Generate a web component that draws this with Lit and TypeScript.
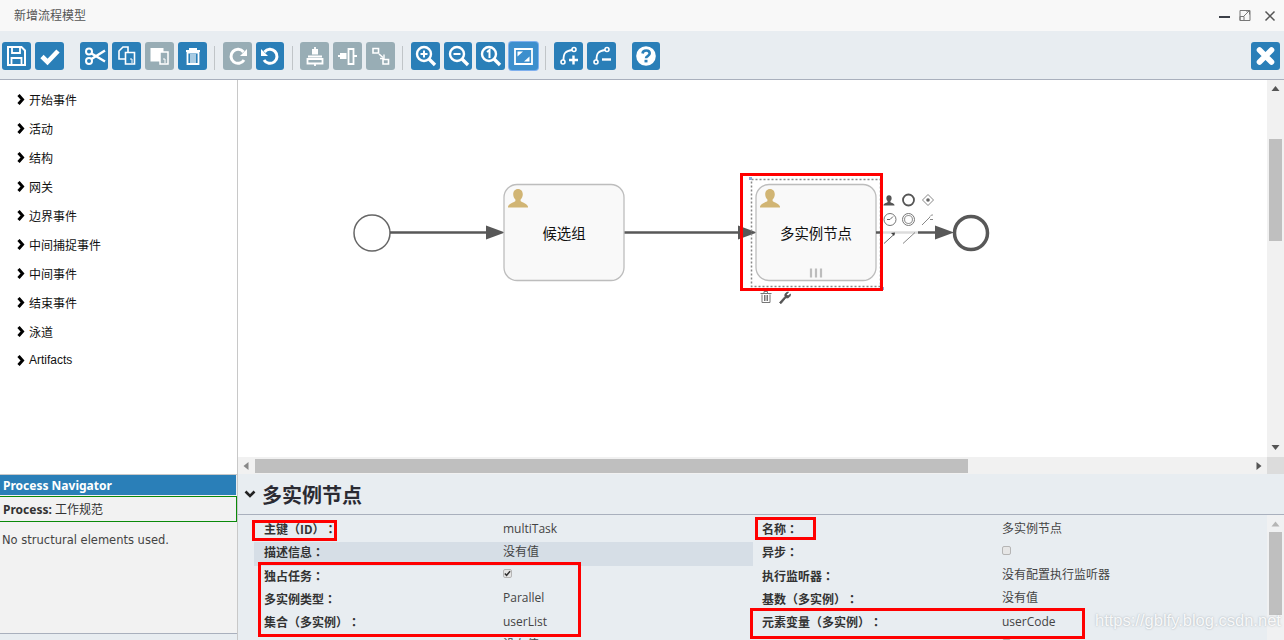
import { LitElement, html, css, svg } from "lit";
import { customElement } from "lit/decorators.js";

const I: Record<string, any> = {
  save: svg`<path d="M6 5h13.5l3.500 3.500V23H6z" fill="none" stroke="#fff" stroke-width="2"/><path d="M10 5.500v5.500h8V5.500M9.500 23v-7h10v7" fill="none" stroke="#fff" stroke-width="1.800"/>`,
  check: svg`<path d="M7 14.500l5.500 5.500L23 9" fill="none" stroke="#fff" stroke-width="4.600"/>`,
  cut: svg`<circle cx="9" cy="9.500" r="3" fill="none" stroke="#fff" stroke-width="2"/><circle cx="9" cy="19" r="3" fill="none" stroke="#fff" stroke-width="2"/><path d="M11.500 11.500L25 19.500M11.500 17L25 8.500" stroke="#fff" stroke-width="2.400"/>`,
  copy: svg`<path d="M7 9l4-4h5v12H7z" fill="none" stroke="#fff" stroke-width="1.600"/><path d="M13.500 10.500h9v11.500h-9z" fill="#2a7fb8" stroke="#fff" stroke-width="1.600"/><path d="M20 21v-4h-2" stroke="#fff" fill="none"/>`,
  paste: svg`<path d="M5.500 6h13v13.500h-13z" fill="#fff"/><path d="M15 10h8v12h-8z" fill="#98adb5" stroke="#fff" stroke-width="1.500"/><path d="M20 21v-4h-2" stroke="#fff" fill="none"/>`,
  del: svg`<path d="M8 9h14M12 8.500V7h6v1.500" fill="none" stroke="#fff" stroke-width="2"/><path d="M9.500 10.500v11.500h11V10.500z" fill="none" stroke="#fff" stroke-width="1.800"/><path d="M13 12v9M15 12v9M17 12v9" stroke="#fff" stroke-width="1.200"/>`,
  redo: svg`<path d="M20.500 10A7 7 0 1 0 21 18" fill="none" stroke="#fff" stroke-width="3"/><path d="M24 7v7h-7z" fill="#fff"/>`,
  undo: svg`<path d="M8.500 10A7 7 0 1 1 8 18" fill="none" stroke="#fff" stroke-width="3"/><path d="M5 7v7h7z" fill="#fff"/>`,
  al1: svg`<path d="M12 7h6v5.500h-6z" fill="#fff"/><path d="M7.500 17h15v4.500h-15z" fill="none" stroke="#fff" stroke-width="1.800"/><path d="M8 14.500h14M15 5v4M15 21v3" stroke="#fff" stroke-width="1.800"/>`,
  al2: svg`<path d="M7 11h6.500v6H7z" fill="#fff"/><path d="M15.500 7h5v15h-5z" fill="none" stroke="#fff" stroke-width="1.800"/><path d="M5 14h3M20 14h4" stroke="#fff" stroke-width="1.800"/>`,
  size: svg`<path d="M7 6.500h5.500v4.500H7zM17 17.500h5.500V22H17z" fill="none" stroke="#fff" stroke-width="1.600"/><path d="M13 12l4 3.500" stroke="#fff" stroke-width="1.600"/><path d="M18 12.500v4h-4" fill="none" stroke="#fff" stroke-width="1.400"/>`,
  zin: svg`<circle cx="13" cy="12" r="7" fill="none" stroke="#fff" stroke-width="2.400"/><path d="M18 17l6 6" stroke="#fff" stroke-width="3.400"/><path d="M9.500 12h7M13 8.500v7" stroke="#fff" stroke-width="2"/>`,
  zout: svg`<circle cx="13" cy="12" r="7" fill="none" stroke="#fff" stroke-width="2.400"/><path d="M18 17l6 6" stroke="#fff" stroke-width="3.400"/><path d="M9.500 12h7" stroke="#fff" stroke-width="2"/>`,
  zone: svg`<circle cx="13" cy="12" r="7" fill="none" stroke="#fff" stroke-width="2.400"/><path d="M18 17l6 6" stroke="#fff" stroke-width="3.400"/><path d="M11 10l2.500-2v8" fill="none" stroke="#fff" stroke-width="2"/>`,
  fit: svg`<path d="M6 7h17v15H6z" fill="none" stroke="#fff" stroke-width="1.800"/><path d="M8.500 9.500h5.500l-5.500 5zM20.500 19.500H15l5.500-5z" fill="#fff"/>`,
  badd: svg`<circle cx="9" cy="20" r="2" fill="none" stroke="#fff" stroke-width="1.600"/><circle cx="20" cy="7.500" r="2" fill="none" stroke="#fff" stroke-width="1.600"/><path d="M9.500 18c0-7 2-9 8.500-10" fill="none" stroke="#fff" stroke-width="1.800"/><path d="M15 18h9M19.500 13.500v9" stroke="#fff" stroke-width="2.400"/>`,
  brem: svg`<circle cx="9" cy="20" r="2" fill="none" stroke="#fff" stroke-width="1.600"/><circle cx="20" cy="7.500" r="2" fill="none" stroke="#fff" stroke-width="1.600"/><path d="M9.500 18c0-7 2-9 8.500-10" fill="none" stroke="#fff" stroke-width="1.800"/><path d="M15 17.500h9" stroke="#fff" stroke-width="2.400"/>`,
  help: svg`<circle cx="14" cy="14" r="9.800" fill="#fff"/><path d="M10.500 11.500c.5-4 7-4 7.200-.2.100 3-3.700 2.600-3.700 5" fill="none" stroke="#2a7fb8" stroke-width="2.600"/><path d="M12.500 17.800h3v2.600h-3z" fill="#2a7fb8"/>`,
  close: svg`<path d="M8.500 8l12 12M20.500 8l-12 12" stroke="#fff" stroke-width="5.600" stroke-linecap="round"/>`,
};

type B = { i: string; off?: boolean; on?: boolean } | "sep" | "gap";
const TOOLS: B[] = [
  { i: "save" }, { i: "check" }, "gap",
  { i: "cut" }, { i: "copy" }, { i: "paste", off: true }, { i: "del" }, "sep",
  { i: "redo", off: true }, { i: "undo" }, "sep",
  { i: "al1", off: true }, { i: "al2", off: true }, { i: "size", off: true }, "sep",
  { i: "zin" }, { i: "zout" }, { i: "zone" }, { i: "fit", on: true }, "sep",
  { i: "badd" }, { i: "brem" }, "gap",
  { i: "help" },
];

const PALETTE = ["开始事件", "活动", "结构", "网关", "边界事件", "中间捕捉事件", "中间事件", "结束事件", "泳道", "Artifacts"];

const LEFT: [string, any, boolean?][] = [
  ["主键（ID）：", "multiTask"],
  ["描述信息：", "没有值", true],
  ["独占任务：", "on"],
  ["多实例类型：", "Parallel"],
  ["集合（多实例）：", "userList"],
  ["", "没有值"],
];
const RIGHT: [string, any][] = [
  ["名称：", "多实例节点"],
  ["异步：", "off"],
  ["执行监听器：", "没有配置执行监听器"],
  ["基数（多实例）：", "没有值"],
  ["元素变量（多实例）：", "userCode"],
  ["", "off"],
];

const person = (x: number, y: number, s: number, c: string) => svg`
  <g transform="translate(${x} ${y}) scale(${s})" fill="${c}">
    <path d="M0-9.500c3 0 4.800 2.300 4.800 5.200 0 2.200-.9 4-2.200 5.200v1.600c0 .8 6 2 7.400 5.500v1H-10v-1c1.400-3.500 7.400-4.700 7.400-5.500V.9C-3.900-.3-4.800-2.100-4.800-4.300-4.800-7.200-3-9.500 0-9.500z"/>
  </g>`;

@customElement("app-root")
export class AppRoot extends LitElement {
  static styles = css`
    :host { display: block; width: 1284px; height: 640px; overflow: hidden; position: relative;
      font-family: "Open Sans", "Noto Sans CJK SC", sans-serif; font-size: 12px; color: #333; background: #fff; text-spacing-trim: space-all; }
    .titlebar { height: 31px; background: #f8f8f8; display: flex; align-items: center; padding: 0 14px 2px; color: #555;
      font-family: "Liberation Sans", "Noto Sans CJK SC", sans-serif; box-sizing: border-box; }
    .titlebar .t { flex: 1; }
    .winctl { display: flex; align-items: center; gap: 8px; margin: 2px -6px 0 0; }
    .winclose { margin-left: 5px; }
    .toolbar { height: 49px; box-sizing: border-box; background: #e8edf1; border-bottom: 1px solid #a9b0bd;
      display: flex; align-items: flex-start; padding: 11px 4px 0 2px; gap: 4px; }
    .btn { width: 28.8px; height: 28px; border-radius: 3px; background: #2a7fb8; flex: none; box-sizing: border-box; display: block; }
    .btn svg { display: block; }
    .btn.off { background: #98adb5; }
    .btn.on { background: #3d8fcd; box-shadow: 0 0 0 1px #7fb0ee; }
    .sep { width: 1px; height: 24px; margin: 4px 3.5px 0; background: #c0c5c8; flex: none; }
    .sep.gap { background: none; }
    .grow { flex: 1; }
    .main { display: grid; grid-template-columns: 237px 1px 1fr; height: 560px; }
    .divider { background: #c8c8c8; }
    .left { display: flex; flex-direction: column; min-width: 0; background: #e8edf1; }
    .palette { height: 395px; background: #fff; padding-top: 4.5px; box-sizing: border-box; border-bottom: 1px solid #c8c8c8;
      font-family: "Liberation Sans", "Noto Sans CJK SC", sans-serif; color: #111; }
    .pal { height: 29px; display: flex; align-items: center; padding-left: 17px; gap: 4px; }
    .pal svg { flex: none; }
    .navh { height: 20px; line-height: 22px; background: #2a7fb8; color: #fff; font-weight: 700; padding-left: 3px; margin-right: 1px;
      font-family: "Noto Sans", sans-serif; font-size: 12px; }
    .navbody { height: 139px; background: #f2f2f2; border-bottom: 1px solid #a9b0bd; box-sizing: border-box; }
    .proc { margin-top: 1px; height: 26px; line-height: 26px; box-sizing: border-box; border: 1px solid #0a8a0a; border-left: 0; padding-left: 3px;
      font-family: "Noto Sans", "Noto Sans CJK SC", sans-serif; font-size: 12px; }
    .proc b { font-weight: 700; }
    .nostruct { margin: 11px 0 0 2px; font-family: "DejaVu Sans", sans-serif; font-size: 11.5px; color: #444; }
    .work { display: flex; flex-direction: column; min-width: 0; }
    .canvasrow { height: 377px; display: flex; background: #fff; }
    .canvas { flex: 1; overflow: hidden; }
    .canvas svg { display: block; }
    .canvas text { font-family: "Liberation Sans", "Noto Sans CJK SC", sans-serif; font-size: 14.4px; fill: #111; }
    .vbar { width: 17px; background: #f1f1f1; display: flex; flex-direction: column; align-items: center; padding: 2px 0 3px; box-sizing: border-box; }
    .thumb { background: #bfbfbf; }
    .vbar .sp1 { height: 43px; flex: none; }
    .vbar .thumb { width: 13px; height: 102px; flex: none; }
    .vbar .grow { flex: 1; }
    .arrow { flex: none; display: block; }
    .hbar { height: 17px; background: #f1f1f1; display: flex; align-items: center; }
    .hbar .thumb { height: 14px; width: 713px; }
    .corner { width: 17px; height: 17px; background: #dcdcdc; }
    .props { flex: 1; background: #e8edf1; min-height: 0; overflow: hidden; display: flex; flex-direction: column; }
    .phead { height: 41px; flex: none; box-sizing: border-box; border-bottom: 1px solid #a9b0bd; display: flex; align-items: center; padding-left: 6px; gap: 6px;
      font-size: 20px; font-weight: 700; color: #2b2b33; font-family: "Noto Sans CJK SC", sans-serif; }
    .pbody { flex: 1; display: flex; min-height: 0; }
    .pgrid { flex: 1; display: grid; grid-template-columns: 499px 499px; padding: 3px 0 0 16px; align-content: start; }
    .row { height: 23.25px; line-height: 21.25px; display: grid; grid-template-columns: 249px 1fr; white-space: nowrap; }
    .row.shade { background: #d6dee6; margin-top: .75px; margin-bottom: -1.5px; height: 24px; line-height: 20.5px; }
    .lab { padding-left: 10px; font-weight: 700; color: #333; font-family: "Noto Sans CJK SC", sans-serif; font-size: 12px; }
    .rcol .lab { padding-left: 9px; }
    .colon { font-family: "Noto Sans CJK TC", sans-serif; }
    .val { color: #444; font-family: "Open Sans", "Noto Sans CJK SC", sans-serif; font-size: 12px; margin-top: -.5px; }
    .cb { display: inline-block; width: 7px; height: 7px; border: 1px solid #b5b5b5; border-radius: 2px; background: #e6e6e6; vertical-align: 1px; }
    .cb svg { display: block; }
    .pbar { width: 17px; background: #f0f1f2; display: flex; flex-direction: column; align-items: center; flex: none; }
    .pbar .thumb { width: 13px; height: 83px; flex: none; margin-top: -2px; }
    .mark { position: absolute; border: 3px solid #f00; box-sizing: border-box; pointer-events: none; }
    .m1 { left: 740px; top: 173px; width: 143px; height: 118px; }
    .m2 { left: 252px; top: 520px; width: 85px; height: 21px; }
    .m3 { left: 258px; top: 562px; width: 323px; height: 75px; }
    .m4 { left: 755px; top: 517px; width: 61px; height: 23px; }
    .m5 { left: 750px; top: 608px; width: 335px; height: 31px; }
    .wm { position: absolute; left: 1095px; top: 611px; color: rgba(255,255,255,.9); font-family: "Liberation Sans", sans-serif; font-size: 16.5px;
      text-shadow: 0 0 2px rgba(110,120,130,.55); white-space: nowrap; }
  `;

  private cell(v: any) {
    if (v === "on") return html`<span class="cb"><svg width="7" height="7" viewBox="0 0 7 7"><path d="M.8 3.500l1.800 1.800 3.500-4" fill="none" stroke="#333" stroke-width="1.500"/></svg></span>`;
    if (v === "off") return html`<span class="cb"></span>`;
    return v;
  }

  private label(l: string) {
    if (!l.endsWith("：")) return l;
    return html`${l.slice(0, -1)}<span class="colon">：</span>`;
  }

  private tri(dir: "u" | "d" | "l" | "r", c: string, sz = 17, h = 16) {
    const cx = sz / 2, cy = h / 2;
    const p = { u: `${cx - 4},${cy + 2} ${cx + 4},${cy + 2} ${cx},${cy - 3}`, d: `${cx - 4},${cy - 2} ${cx + 4},${cy - 2} ${cx},${cy + 3}`,
      l: `${cx + 2},${cy - 4} ${cx + 2},${cy + 4} ${cx - 3},${cy}`, r: `${cx - 2},${cy - 4} ${cx - 2},${cy + 4} ${cx + 3},${cy}` }[dir];
    return html`<svg class="arrow" width="${sz}" height="${h}" viewBox="0 0 ${sz} ${h}"><polygon points="${p}" fill="${c}"/></svg>`;
  }

  private diagram() {
    const ox = 238, oy = 80;
    return html`<svg width="1029" height="377" viewBox="${ox} ${oy} 1029 377">
      <circle cx="372" cy="233" r="18" fill="#fff" stroke="#666" stroke-width="1.5"/>
      <path d="M390 232.500H488M624 232.500H740" stroke="#585858" stroke-width="2.5"/>
      <polygon points="486,225.500 505,232.500 486,239.500" fill="#585858"/>
      <rect x="504" y="184.500" width="120" height="96" rx="13" fill="#f9f9f9" stroke="#bdbdbd" stroke-width="1.3"/>
      ${person(518, 198.500, 1, "#d1b574")}
      <text x="564" y="238.500" text-anchor="middle">候选组</text>

      <polygon points="738,225.500 757,232.500 738,239.500" fill="#585858"/>
      <rect x="751.500" y="179.500" width="129" height="107" fill="none" stroke="#888" stroke-width="1.5" stroke-dasharray="2 2"/>
      <rect x="749" y="177" width="3" height="3" fill="#8aa8d8"/>
      <rect x="881" y="287" width="3" height="3" fill="#8aa8d8"/>
      <rect x="756" y="184.500" width="120" height="96" rx="13" fill="#f9f9f9" stroke="#bdbdbd" stroke-width="1.3"/>
      ${person(770, 198.500, 1, "#d1b574")}
      <text x="816" y="238.500" text-anchor="middle">多实例节点</text>
      <path d="M811 268.500v9M816 268.500v9M821 268.500v9" stroke="#bdbdbd" stroke-width="2.2"/>

      <path d="M876 232.500H881" stroke="#585858" stroke-width="2.5"/>
      <path d="M881 232.500H918" stroke="#dcdcdc" stroke-width="2.5"/>
      <path d="M918 232.500H937" stroke="#585858" stroke-width="2.5"/>
      <polygon points="935,225.500 954,232.500 935,239.500" fill="#585858"/>
      <circle cx="971" cy="233" r="16.500" fill="#fff" stroke="#585858" stroke-width="3.5"/>

      ${person(889, 200.500, .55, "#555")}
      <circle cx="908.500" cy="200" r="5.500" fill="none" stroke="#555" stroke-width="1.8"/>
      <path d="M928 194.500l5.500 5.500-5.500 5.500-5.500-5.500z" fill="#fff" stroke="#888"/>
      <circle cx="928" cy="200" r="1.800" fill="#666"/>
      <circle cx="890" cy="219.500" r="6" fill="#fff" stroke="#777"/>
      <path d="M890 219.500l3-3M890 219.500h-3" stroke="#666"/>
      <circle cx="908.500" cy="219.500" r="6" fill="#fff" stroke="#777"/>
      <circle cx="908.500" cy="219.500" r="4" fill="none" stroke="#999" stroke-width="1.2"/>
      <path d="M922 225l8-8M930 216.500c1-1.500 2-1.500 3-1.500M930 219.500h3" stroke="#888" fill="none"/>
      <path d="M884 243.500l11-10" stroke="#666"/><path d="M895 232.500l-4 .5 3 3z" fill="#444"/>
      <path d="M903 243.500l12-11" stroke="#888"/>

      <g fill="none" stroke="#777">
        <path d="M760.500 293.500h11M764 293v-1.500h3.500V293"/>
        <path d="M762 294.500v8h8v-8"/>
        <path d="M764.500 295v6M766 295v6M767.500 295v6"/>
      </g>
      <path d="M779.500 302.500l5.500-6c-.8-2 .6-4.500 3.500-4.500l-2 2.500 1.500 1.500 2.500-2c.2 2.800-2.400 4.600-4.500 3.700l-5 6z" fill="#555" stroke="#555" stroke-width=".8"/>
    </svg>`;
  }

  render() {
    return html`
      <div class="titlebar">
        <span class="t">新增流程模型</span>
        <span class="winctl">
          <svg width="13" height="12" viewBox="0 0 13 12"><path d="M1 7h11" stroke="#3c4048" stroke-width="2"/></svg>
          <svg width="12" height="13" viewBox="0 0 12 13"><path d="M1 1.500h10v10H1z" fill="none" stroke="#777"/><path d="M1 7.500h4v4H1zM5 7l5-5M7 2h3.500v3.500" fill="none" stroke="#777"/></svg>
          <svg class="winclose" width="12" height="12" viewBox="0 0 12 12"><path d="M1.500 1.500l9 9M10.500 1.500l-9 9" stroke="#555" stroke-width="1.5"/></svg>
        </span>
      </div>
      <div class="toolbar">
        ${TOOLS.map((t) =>
          t === "sep" ? html`<span class="sep"></span>` :
          t === "gap" ? html`<span class="sep gap"></span>` :
          html`<span class="btn ${t.off ? "off" : ""} ${t.on ? "on" : ""}"><svg width="29" height="28" viewBox="0 0 29 28">${I[t.i]}</svg></span>`)}
        <span class="grow"></span>
        <span class="btn"><svg width="29" height="28" viewBox="0 0 29 28">${I.close}</svg></span>
      </div>
      <div class="main">
        <div class="left">
          <div class="palette">
            ${PALETTE.map((p) => html`<div class="pal"><svg width="8" height="11" viewBox="0 0 8 11"><path d="M1.500 1l4 4.500-4 4.500" fill="none" stroke="#000" stroke-width="3"/></svg><span>${p}</span></div>`)}
          </div>
          <div class="navh">Process Navigator</div>
          <div class="navbody">
            <div class="proc"><b>Process:</b> 工作规范</div>
            <div class="nostruct">No structural elements used.</div>
          </div>
        </div>
        <div class="divider"></div>
        <div class="work">
          <div class="canvasrow">
            <div class="canvas">${this.diagram()}</div>
            <div class="vbar">
              ${this.tri("u", "#555", 17, 14)}
              <div class="sp1"></div>
              <div class="thumb"></div>
              <div class="grow"></div>
              ${this.tri("d", "#555", 17, 14)}
            </div>
          </div>
          <div class="hbar">
            ${this.tri("l", "#888", 17, 16)}
            <div class="thumb"></div>
            <div class="grow"></div>
            ${this.tri("r", "#555", 17, 16)}
            <div class="corner"></div>
          </div>
          <div class="props">
            <div class="phead">
              <svg width="12" height="8" viewBox="0 0 12 8"><path d="M1.500 1.500l4.500 4.500 4.500-4.500" fill="none" stroke="#222" stroke-width="2.6"/></svg>
              <span>多实例节点</span>
            </div>
            <div class="pbody">
              <div class="pgrid">
                <div class="lcol">
                  ${LEFT.map(([l, v, s]) => html`<div class="row ${s ? "shade" : ""}"><span class="lab">${this.label(l)}</span><span class="val">${this.cell(v)}</span></div>`)}
                </div>
                <div class="rcol">
                  ${RIGHT.map(([l, v]) => html`<div class="row"><span class="lab">${this.label(l)}</span><span class="val">${this.cell(v)}</span></div>`)}
                </div>
              </div>
              <div class="pbar">
                ${this.tri("u", "#b5b5b5", 17, 19)}
                <div class="thumb"></div>
              </div>
            </div>
          </div>
        </div>
      </div>
      <div class="mark m1"></div>
      <div class="mark m2"></div>
      <div class="mark m3"></div>
      <div class="mark m4"></div>
      <div class="mark m5"></div>
      <div class="wm">https://gblfy.blog.csdn.net</div>
    `;
  }
}
